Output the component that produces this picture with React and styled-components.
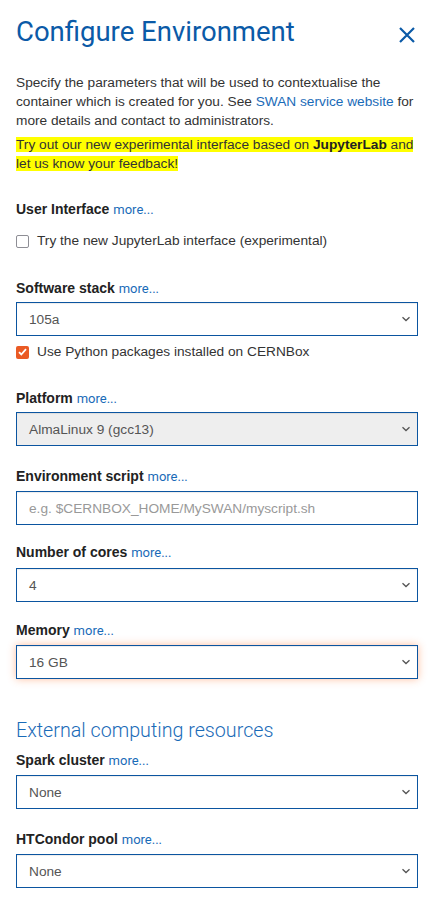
import React from "react";
import styled, { createGlobalStyle } from "styled-components";

const Global = createGlobalStyle`
  html, body {
    margin: 0;
    padding: 0;
    background: #fff;
  }
  body {
    font-family: "Liberation Sans", Arial, sans-serif;
    font-size: 13.7px;
    color: #333;
  }
`;

const Page = styled.div`
  padding: 0 21px 0 16px;
`;

const Header = styled.div`
  display: flex;
  align-items: center;
  justify-content: space-between;
  padding-top: 11px;
  height: 40px;
`;

const Title = styled.h1`
  margin: 0;
  font-family: Roboto, sans-serif;
  font-weight: 400;
  font-size: 27.5px;
  color: #0b5aa7;
`;

const Close = styled.button`
  border: 0;
  background: none;
  padding: 0;
  margin-right: 2px;
  margin-top: 8px;
  width: 18px;
  height: 18px;
  display: flex;
`;

const Intro = styled.p`
  margin: 22px 0 0;
  line-height: 19px;
`;

const Link = styled.a`
  color: #1a6bb8;
  text-decoration: none;
`;

const Notice = styled.p`
  margin: 5px 0 0;
  line-height: 19px;
`;

const Mark = styled.span`
  background: #ffff00;
  color: #333;
  b {
    color: #222;
  }
`;

const Field = styled.div`
  margin-top: ${(p) => p.$top}px;
`;

const Label = styled.div`
  font-weight: 700;
  font-size: 14px;
  color: #222;
  line-height: 20px;
  margin-bottom: ${(p) => p.$gap ?? 3}px;
`;

const More = styled.a`
  font-weight: 400;
  font-family: Roboto, sans-serif;
  font-size: 13px;
  color: #1a6bb8;
  text-decoration: none;
`;

const CheckRow = styled.label`
  display: flex;
  align-items: center;
  gap: 8px;
  line-height: 20px;
  margin-top: ${(p) => p.$top ?? 0}px;
  color: #333;
`;

const Box = styled.span`
  width: 13px;
  height: 13px;
  box-sizing: border-box;
  border-radius: 2px;
  flex: none;
  display: flex;
  align-items: center;
  justify-content: center;
  border: ${(p) => (p.$on ? "none" : "1px solid #8e8e95")};
  background: ${(p) => (p.$on ? "#ea5a24" : "#fff")};
`;

const SelectBox = styled.div`
  height: 34px;
  box-sizing: border-box;
  border: 1px solid #0b55a0;
  background: ${(p) => (p.$disabled ? "#eeeeee" : "#fff")};
  box-shadow: inset 0 1px 1px rgba(0, 0, 0, 0.075)
    ${(p) => (p.$focus ? ", 0 0 8px rgba(255, 110, 40, 0.45)" : "")};
  display: flex;
  align-items: center;
  justify-content: space-between;
  padding: 0 6px 0 12px;
  color: #555;
`;

const Placeholder = styled.span`
  color: #999;
`;

const Section = styled.h2`
  margin: 39px 0 0;
  font-family: Roboto, sans-serif;
  font-weight: 300;
  font-size: 19.7px;
  color: #1a6bb8;
  line-height: 26px;
`;

const Chevron = () => (
  <svg width="10" height="6" viewBox="0 0 10 6">
    <path d="M1.5 1.2l3.5 3.3 3.5-3.3" fill="none" stroke="#555" strokeWidth="1.3" />
  </svg>
);

const Select = ({ value, disabled, focus }) => (
  <SelectBox $disabled={disabled} $focus={focus}>
    <span>{value}</span>
    <Chevron />
  </SelectBox>
);

const FieldLabel = ({ children, gap }) => (
  <Label $gap={gap}>
    {children} <More href="#">more...</More>
  </Label>
);

const App = () => {
  return (
    <>
      <Global />
      <Page>
        <Header>
          <Title>Configure Environment</Title>
          <Close aria-label="close">
            <svg width="18" height="18" viewBox="0 0 18 18">
              <path d="M2 2l14 14M16 2L2 16" stroke="#0b5aa7" strokeWidth="2.2" />
            </svg>
          </Close>
        </Header>

        <Intro>
          Specify the parameters that will be used to contextualise the container which is
          created for you. See <Link href="#">SWAN service website</Link> for more details
          and contact to administrators.
        </Intro>
        <Notice>
          <Mark>
            Try out our new experimental interface based on <b>JupyterLab</b> and let us know
            your feedback!
          </Mark>
        </Notice>

        <Field $top={26}>
          <FieldLabel gap={11}>User Interface</FieldLabel>
          <CheckRow>
            <Box />
            Try the new JupyterLab interface (experimental)
          </CheckRow>
        </Field>

        <Field $top={27}>
          <FieldLabel>Software stack</FieldLabel>
          <Select value="105a" />
          <CheckRow $top={6}>
            <Box $on>
              <svg width="9" height="8" viewBox="0 0 9 8">
                <path d="M1 4.2l2.3 2.3L8 1.2" fill="none" stroke="#fff" strokeWidth="1.8" />
              </svg>
            </Box>
            Use Python packages installed on CERNBox
          </CheckRow>
        </Field>

        <Field $top={26}>
          <FieldLabel>Platform</FieldLabel>
          <Select value="AlmaLinux 9 (gcc13)" disabled />
        </Field>

        <Field $top={20}>
          <FieldLabel gap={4}>Environment script</FieldLabel>
          <SelectBox>
            <Placeholder>e.g. $CERNBOX_HOME/MySWAN/myscript.sh</Placeholder>
          </SelectBox>
        </Field>

        <Field $top={17}>
          <FieldLabel gap={5}>Number of cores</FieldLabel>
          <Select value="4" />
        </Field>

        <Field $top={18}>
          <FieldLabel gap={4}>Memory</FieldLabel>
          <Select value="16 GB" focus />
        </Field>

        <Section>External computing resources</Section>

        <Field $top={6}>
          <FieldLabel gap={4}>Spark cluster</FieldLabel>
          <Select value="None" />
        </Field>

        <Field $top={20}>
          <FieldLabel gap={4}>HTCondor pool</FieldLabel>
          <Select value="None" />
        </Field>
      </Page>
    </>
  );
};

export default App;
